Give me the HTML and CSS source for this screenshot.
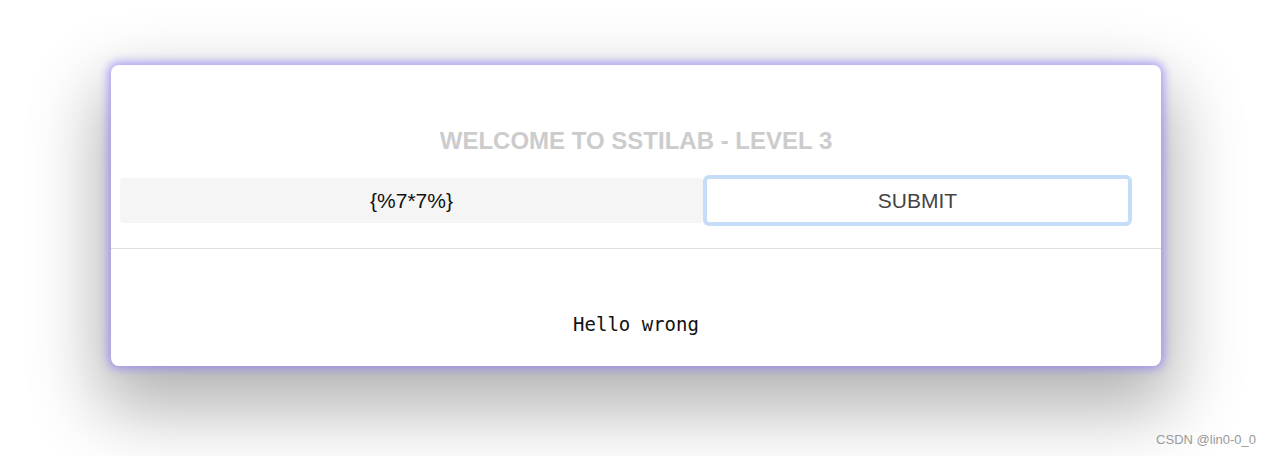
FILE: index.html
```html
<!DOCTYPE html>
<html>
<head>
<meta charset="utf-8">
<link rel="stylesheet" href="styles.css">
</head>
<body>
<div class="page">
  <div class="card">
    <h1 class="title">WELCOME TO SSTILAB - LEVEL 3</h1>
    <form class="form">
      <input class="field" type="text" value="{%7*7%}">
      <button class="submit" type="button">SUBMIT</button>
    </form>
    <hr class="divider">
    <div class="result">Hello wrong</div>
  </div>
  <div class="watermark">CSDN @lin0-0_0</div>
</div>
</body>
</html>
```
FILE: styles.css
```css
html, body {
  margin: 0;
  padding: 0;
  background: #ffffff;
}
.page {
  width: 1270px;
  height: 456px;
  position: relative;
  overflow: hidden;
  padding-top: 65px;
  box-sizing: border-box;
}
.card {
  margin-left: 111px;
  width: 1050px;
  height: 301px;
  background: #fff;
  border-radius: 8px;
  box-shadow: 0 0 10px 3px rgba(140, 128, 245, 0.7),
              0 32px 70px 12px rgba(0, 0, 0, 0.3);
  box-sizing: border-box;
  padding-top: 62px;
}
.title {
  margin: 0;
  height: 28px;
  line-height: 28px;
  text-align: center;
  font-family: "Liberation Sans", Arial, sans-serif;
  font-weight: bold;
  font-size: 24px;
  color: #cccccc;
}
.form {
  display: flex;
  align-items: center;
  margin: 20px 0 0 9px;
  height: 51px;
}
.field {
  width: 583px;
  height: 45px;
  box-sizing: border-box;
  border: none;
  background: #f5f5f5;
  border-radius: 4px;
  text-align: center;
  font-family: "Liberation Sans", Arial, sans-serif;
  font-size: 21px;
  color: #111;
  outline: none;
  padding: 0;
}
.submit {
  width: 429px;
  height: 51px;
  box-sizing: border-box;
  border: 4px solid #c5ddf7;
  border-radius: 6px;
  background: #fff;
  font-family: "Liberation Sans", Arial, sans-serif;
  font-size: 21px;
  color: #444;
  padding: 0;
}
.divider {
  margin: 22px 0 0 0;
  border: none;
  border-top: 1px solid #e0e0e0;
  height: 0;
}
.result {
  margin-top: 63px;
  text-align: center;
  font-family: "DejaVu Sans Mono", monospace;
  font-size: 19px;
  line-height: 24px;
  color: #111;
}
.watermark {
  position: absolute;
  right: 14px;
  top: 432px;
  font-family: "Liberation Sans", Arial, sans-serif;
  font-size: 13px;
  color: #999;
}
```
